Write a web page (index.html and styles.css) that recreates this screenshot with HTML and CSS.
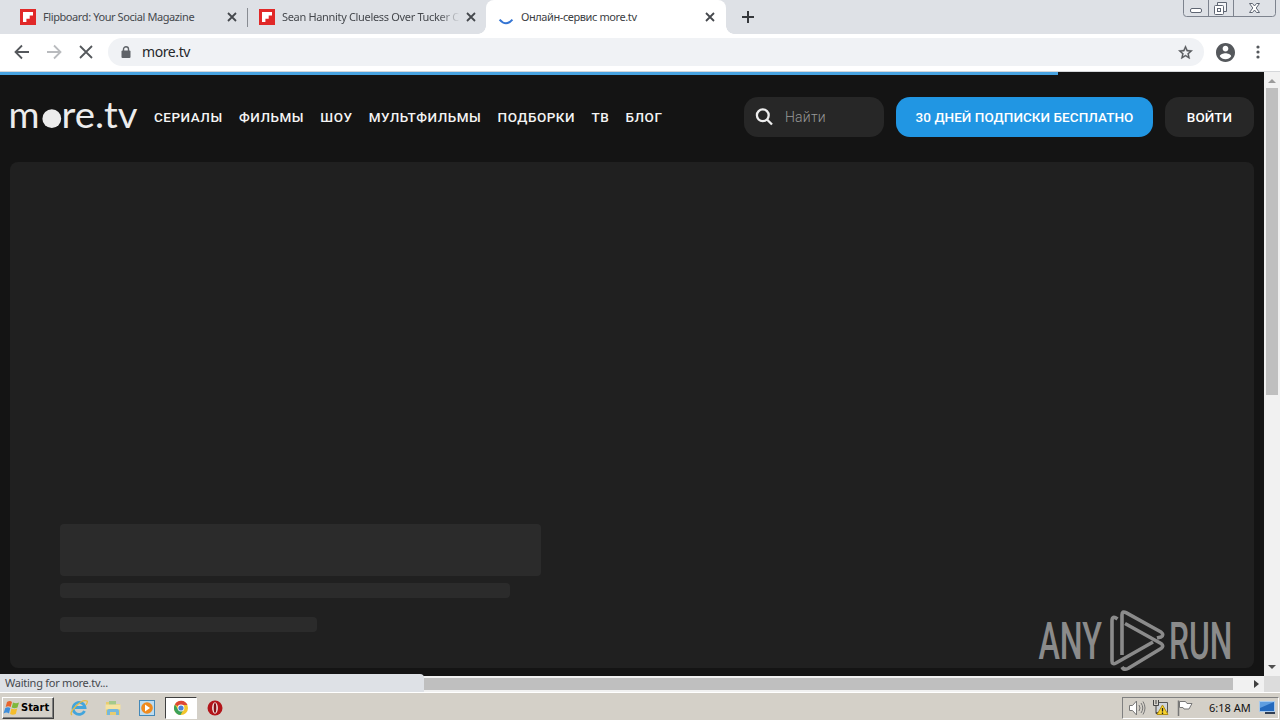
FILE: index.html
```html
<!DOCTYPE html>
<html lang="ru">
<head>
    <meta charset="UTF-8">
    <meta name="viewport" content="width=device-width, initial-scale=1.0">
    <title>Онлайн-сервис more.tv</title>
    <link rel="stylesheet" href="styles.css">
</head>
<body>
    <!-- Tabs -->
    <div class="tab-strip">
        <div class="tab tab-first">
            <svg class="favicon" viewBox="0 0 16 16"><rect width="16" height="16" fill="#e12828"/><path d="M3 3h10v3.4h-3.3v3.3H6.4V13H3z" fill="#fff"/></svg>
            <span class="tab-title">Flipboard: Your Social Magazine</span>
            <svg class="tab-close" viewBox="0 0 10 10"><path d="M1 1l8 8M9 1L1 9"/></svg>
        </div>
        <div class="tab tab-second">
            <svg class="favicon" viewBox="0 0 16 16"><rect width="16" height="16" fill="#e12828"/><path d="M3 3h10v3.4h-3.3v3.3H6.4V13H3z" fill="#fff"/></svg>
            <span class="tab-title tab-title-fade">Sean Hannity Clueless Over Tucker C</span>
            <svg class="tab-close" viewBox="0 0 10 10"><path d="M1 1l8 8M9 1L1 9"/></svg>
        </div>
        <div class="tab tab-active">
            <svg class="favicon" viewBox="0 0 16 16"><path d="M1.6 10.600Q8 18 14.4 10.600" fill="none" stroke="#3575d3" stroke-width="2"/></svg>
            <span class="tab-title">Онлайн-сервис more.tv</span>
            <svg class="tab-close" viewBox="0 0 10 10"><path d="M1 1l8 8M9 1L1 9"/></svg>
        </div>
        <svg class="new-tab" viewBox="0 0 12 12"><path d="M6 0v12M0 6h12" stroke="#35383c" stroke-width="2"/></svg>
        <div class="window-buttons">
            <svg width="93" height="17" viewBox="0 0 93 17" fill="none" stroke="#5f6673">
                <path d="M.5 0v13.5q0 3 3 3h86q3 0 3-3V0M25.5 0v16M50.5 0v16" stroke="#7d838e"/>
                <rect x="7.5" y="8.500" width="11" height="4" rx="1.500" fill="#fff"/>
                <path d="M34.500 5.500v-3h9v9h-3" fill="#f4f5f7"/>
                <rect x="31.500" y="5.500" width="9" height="9" rx="1" fill="#fff"/>
                <rect x="34.500" y="8.500" width="3" height="3"/>
                <path d="M66.500 3.500h3l2 2.500 2-2.500h3l-3.300 4.500 3.300 4.500h-3l-2-2.500-2 2.500h-3l3.300-4.500z" fill="#fff"/>
            </svg>
        </div>
    </div>

    <!-- Address bar -->
    <div class="toolbar">
        <svg class="nav-icons" width="84" height="16" viewBox="0 0 84 16" fill="none" stroke-width="1.800">
            <path d="M15 8H2M8 1.500L1.500 8 8 14.500" stroke="#55585c"/>
            <path d="M33 8h13M40 1.500L46.500 8 40 14.500" stroke="#b9bbbe"/>
            <path d="M66 2l12 12M78 2L66 14" stroke="#55585c"/>
        </svg>
        <div class="omnibox">
            <svg class="lock" viewBox="0 0 10 12"><rect x="0.500" y="4.500" width="9" height="7.500" rx="1" fill="#5f6368"/><path d="M2.500 5V3a2.500 2.200 0 0 1 5 0v2" fill="none" stroke="#5f6368" stroke-width="1.400"/></svg>
            <span class="url">more.tv</span>
            <svg class="star" viewBox="0 0 24 24"><path d="M22 9.240l-7.190-.62L12 2 9.190 8.630 2 9.240l5.460 4.730L5.820 21 12 17.270 18.180 21l-1.630-7.030L22 9.240zM12 15.400l-3.760 2.270 1-4.280-3.320-2.880 4.380-.38L12 6.100l1.710 4.040 4.380.38-3.320 2.880 1 4.280L12 15.400z" fill="#55585c" stroke="#55585c" stroke-width=".5"/></svg>
        </div>
        <svg class="profile" viewBox="2 2 20 20"><path d="M12 2C6.480 2 2 6.480 2 12s4.480 10 10 10 10-4.480 10-10S17.520 2 12 2zm0 3c1.660 0 3 1.340 3 3s-1.340 3-3 3-3-1.340-3-3 1.340-3 3-3zm0 14.200c-2.500 0-4.710-1.280-6-3.220.03-1.990 4-3.080 6-3.080 1.990 0 5.970 1.090 6 3.080-1.290 1.940-3.500 3.220-6 3.220z" fill="#55585c"/></svg>
        <svg class="menu" viewBox="0 0 4 14"><g fill="#55585c"><circle cx="2" cy="2" r="1.600"/><circle cx="2" cy="7" r="1.600"/><circle cx="2" cy="12" r="1.600"/></g></svg>
    </div>

    <div class="viewport">
        <div class="page">
            <div class="progress"></div>
            <header class="header">
                <svg class="logo" width="134" height="56" viewBox="-3 -16 134 56">
                    <text class="logo-text" x="-1.500" y="22.500" textLength="31" lengthAdjust="spacingAndGlyphs">m</text>
                    <circle cx="41.800" cy="13.700" r="9.400"/>
                    <text class="logo-text" x="51.500" y="22.500" textLength="76" lengthAdjust="spacingAndGlyphs">re.tv</text>
                </svg>
                <nav class="nav">
                    <a>СЕРИАЛЫ</a>
                    <a>ФИЛЬМЫ</a>
                    <a>ШОУ</a>
                    <a>МУЛЬТФИЛЬМЫ</a>
                    <a>ПОДБОРКИ</a>
                    <a>ТВ</a>
                    <a>БЛОГ</a>
                </nav>
                <div class="search">
                    <svg width="18" height="18" viewBox="0 0 18 18" fill="none" stroke="#eee" stroke-width="2.300"><circle cx="7.800" cy="7.300" r="5.900"/><path d="M12 11.500l5 5"/></svg>
                    <span>Найти</span>
                </div>
                <div class="btn btn-primary"><span>30 ДНЕЙ ПОДПИСКИ БЕСПЛАТНО</span></div>
                <div class="btn btn-login"><span>ВОЙТИ</span></div>
            </header>
            <!-- Placeholder while the banner is loading -->
            <div class="banner">
                <div class="skeleton skeleton-title"></div>
                <div class="skeleton skeleton-line"></div>
                <div class="skeleton skeleton-short"></div>
            </div>
        </div>
        <div class="scroll-y">
            <div class="arrow-up"></div>
            <div class="thumb-y"></div>
            <div class="arrow-down"></div>
        </div>
        <svg class="watermark" width="200" height="64" viewBox="0 0 200 64">
            <text class="watermark-text" transform="translate(2.500 50) scale(.64 1)" textLength="99" lengthAdjust="spacingAndGlyphs">ANY</text>
            <text class="watermark-text" transform="translate(133 50) scale(.64 1)" textLength="99" lengthAdjust="spacingAndGlyphs">RUN</text>
            <g fill="none" stroke="#8b8b8b" stroke-width="3.600" stroke-linejoin="round">
                <path d="M81.500 10Q76 6 76 12v40q0 4 4 2l37-21"/>
                <path d="M86 46V6q0-4.500 4-2.300L125 23q3.500 3 0 5l-4 1"/>
                <path d="M89 14.500l36 20q3.500 2.500 0 5L92 59.500q-4 2-6-1.500"/>
            </g>
        </svg>
    </div>

    <div class="scroll-x">
        <div class="thumb-x"></div>
        <div class="arrow-right"></div>
        <div class="corner"></div>
        <div class="status">Waiting for more.tv...</div>
    </div>

    <!-- Windows taskbar -->
    <div class="taskbar">
        <div class="start">
            <svg width="18" height="18" viewBox="0 0 18 18">
                <path d="M4 3q3-2 5 0L7.700 8q-2.500-1.500-5 0z" fill="#e8642c"/>
                <path d="M10 3.500q3 1.500 6 0L14.500 8.500q-3 1.500-5.800 0z" fill="#7fb83d"/>
                <path d="M2.300 9q2.700-1.600 5 0L6 14.500q-2.500-1.800-5.500 0z" fill="#3f8edb"/>
                <path d="M8.400 9.600q3 1.500 5.800 0L12.800 15q-3 1.500-5.700 0z" fill="#f4bd2c"/>
            </svg>
            <span>Start</span>
        </div>
        <div class="launch">
            <svg width="18" height="18" viewBox="0 0 18 18" fill="none">
                <path d="M14.500 12a6 6 0 1 1 .5-3.500H5" stroke="#43a5dc" stroke-width="2.800"/>
                <path d="M2 16Q-1 14 6 7T17 2q1 1-1 4" stroke="#e5bc45" stroke-width="1.300"/>
            </svg>
        </div>
        <div class="launch">
            <svg width="18" height="18" viewBox="0 0 18 18">
                <path d="M2 3h5l1 2h8v11H2z" fill="#e8cc70"/><path d="M5 2h7v5H5z" fill="#a3c98a"/>
                <path d="M1.500 5.500h15v5h-15z" fill="#f5e3a0"/><path d="M3 16v-4q0-2 2-2h8q2 0 2 2v4h-3v-3H6v3z" fill="#75b8dc"/>
            </svg>
        </div>
        <div class="launch">
            <svg width="18" height="18" viewBox="0 0 18 18">
                <rect x="1.500" y="1.500" width="15" height="15" fill="#bddcf0" stroke="#4388b8"/>
                <circle cx="9" cy="9" r="5.800" fill="#f08a1d"/><path d="M7 5.500v7l5-3.500z" fill="#fff"/>
            </svg>
        </div>
        <div class="launch launch-active">
            <svg width="16" height="16" viewBox="0 0 16 16">
                <circle cx="8" cy="8" r="7" fill="#f2c52d"/>
                <path d="M8 8L1.900 4.500A7 7 0 0 1 14.500 5H8z" fill="#dd4735"/>
                <path d="M1.900 4.500A7 7 0 0 0 7.500 15L10.500 9.500H5z" fill="#3ba159"/>
                <circle cx="8" cy="8" r="3.400" fill="#fff"/><circle cx="8" cy="8" r="2.600" fill="#4a82d8"/>
            </svg>
        </div>
        <div class="launch">
            <svg width="16" height="16" viewBox="0 0 16 16">
                <circle cx="8" cy="8" r="7.500" fill="#b3151a"/>
                <ellipse cx="8" cy="8" rx="2.900" ry="5.800" fill="#f3e3e0"/><ellipse cx="8" cy="8" rx="1.300" ry="4.900" fill="#841015"/>
            </svg>
        </div>
        <div class="tray">
            <svg width="68" height="18" viewBox="0 0 68 18">
                <g fill="#fff" stroke="#777">
                    <path d="M1.500 6.500h3l4-4.500v14l-4-4.500h-3z"/>
                    <path d="M11 6q2 3 0 6M13 4q3.500 5 0 10M15 2.500q4 6.500 0 13" fill="none"/>
                    <path d="M50.500 17V1.500" stroke-width="1.500"/>
                    <path d="M51.500 2.500h6l1.500 2h5l-3 5.500h-5l-1-1.500h-3.500z"/>
                </g>
                <path d="M30 3.500h9.500v10H28" fill="#cfd4db" stroke="#555"/>
                <path d="M25.500 1v5.500h5V1M28 6v8.500h5M28 1v4" fill="none" stroke="#444"/>
                <path d="M34.500 6l5.500 9.500H29z" fill="#f7d22d" stroke="#b08d12"/>
                <path d="M34.500 9v3.500M34.500 13.500V15" stroke="#222" stroke-width="1.300"/>
            </svg>
            <span class="clock">6:18 AM</span>
            <svg width="17" height="15" viewBox="0 0 17 15">
                <rect x=".5" y="1.500" width="15" height="10" fill="#2469bd" stroke="#a7c9ec"/>
                <path d="M1 2h14L1 8z" fill="#5e9de0"/><path d="M6 13h10" stroke="#303d52" stroke-width="2"/>
            </svg>
        </div>
    </div>
</body>
</html>
```

FILE: styles.css
```css
* {
    box-sizing: border-box;
}
body {
    margin: 0;
    width: 1280px;
    height: 720px;
    overflow: hidden;
    display: flex;
    flex-direction: column;
    background: #141414;
    font-family: "Noto Sans", sans-serif;
    font-size: 11px;
}
svg {
    display: block;
    flex: none;
}

/* Browser window */
.tab-strip {
    display: flex;
    height: 34px;
    flex: none;
    background: #dee1e6;
    position: relative;
}
.tab {
    display: flex;
    align-items: center;
    height: 34px;
    color: #45484d;
}
.tab-first {
    width: 247px;
    padding: 0 10px 0 20px;
}
.tab-second {
    width: 239px;
    padding: 0 10px 0 12px;
    position: relative;
}
.tab-second::before {
    content: "";
    position: absolute;
    left: 0;
    top: 8px;
    width: 1px;
    height: 19px;
    background: #888c92;
}
.tab-active {
    width: 240px;
    padding: 0 11px 0 12px;
    background: #fff;
    border-radius: 8px 8px 0 0;
    color: #3c4043;
    position: relative;
}
.tab-active::before,
.tab-active::after {
    content: "";
    position: absolute;
    bottom: 0;
    width: 8px;
    height: 8px;
}
.tab-active::before {
    left: -8px;
    background: radial-gradient(circle at 0 0, #dee1e6 7.5px, #fff 8px);
}
.tab-active::after {
    right: -8px;
    background: radial-gradient(circle at 100% 0, #dee1e6 7.5px, #fff 8px);
}
.favicon {
    width: 16px;
    height: 16px;
    margin-right: 7px;
}
.tab-title {
    flex: 1;
    white-space: nowrap;
    line-height: 16px;
    letter-spacing: -0.41px;
}
.tab-title-fade {
    margin-right: 6px;
    letter-spacing: -0.33px;
    -webkit-mask-image: linear-gradient(to right, #000 88%, transparent);
    mask-image: linear-gradient(to right, #000 88%, transparent);
}
.tab-close {
    width: 10px;
    height: 10px;
    stroke: #45484d;
    stroke-width: 1.8;
}
.new-tab {
    width: 12px;
    height: 12px;
    margin: 11px 0 0 16px;
}
.window-buttons {
    margin-left: auto;
    margin-right: 4px;
}
.toolbar {
    display: flex;
    align-items: center;
    height: 38px;
    flex: none;
    padding: 0 18px 1px 14px;
    background: #fff;
    border-bottom: 1px solid #d5d7da;
}
.omnibox {
    display: flex;
    align-items: center;
    width: 1096px;
    height: 28px;
    margin-left: 10px;
    padding: 0 10px 0 13px;
    background: #f0f2f5;
    border-radius: 14px;
}
.lock {
    width: 10px;
    height: 12px;
}
.url {
    flex: 1;
    margin-left: 11px;
    padding-bottom: 1px;
    font-size: 14px;
    letter-spacing: -0.4px;
    color: #26282b;
}
.star {
    width: 17px;
    height: 17px;
}
.profile {
    width: 19px;
    height: 19px;
    margin-left: 12px;
}
.menu {
    width: 4px;
    height: 14px;
    margin-left: 21px;
}

/* Page */
.viewport {
    display: flex;
    height: 604px;
    flex: none;
    position: relative;
}
.page {
    width: 1264px;
    background: #141414;
}
.progress {
    width: 1058px;
    height: 3px;
    background: #49a4e2;
}
.header {
    display: flex;
    align-items: center;
    height: 84px;
    padding: 0 10px 0 7px;
}
.logo {
    margin-right: 13px;
    fill: #ececec;
}
.logo-text {
    font-family: Lato, sans-serif;
    font-size: 36px;
}
.nav {
    display: flex;
    gap: 16.3px;
    font-family: Roboto, sans-serif;
    font-size: 13.5px;
    font-weight: 500;
    letter-spacing: 0.52px;
    color: #f4f4f4;
}
.search {
    display: flex;
    align-items: center;
    width: 140px;
    height: 40px;
    margin-left: auto;
    padding-left: 11px;
    border-radius: 14px;
    background: #272727;
    color: #999;
    font-family: Roboto, sans-serif;
    font-size: 14px;
    font-weight: 300;
    letter-spacing: 0.2px;
}
.search span {
    margin-left: 12px;
}
.btn {
    display: flex;
    align-items: center;
    justify-content: center;
    height: 40px;
    margin-left: 12px;
    border-radius: 14px;
    color: #fff;
    font-family: Roboto, sans-serif;
    font-size: 13.5px;
    font-weight: 500;
    letter-spacing: 0.05px;
    white-space: nowrap;
}
.btn-primary {
    width: 257px;
    background: #2196e3;
}
.btn-login {
    width: 89px;
    background: #272727;
}
.banner {
    display: flex;
    flex-direction: column;
    width: 1244px;
    height: 506px;
    margin: 3px 10px 0;
    padding: 362px 50px 0;
    border-radius: 8px;
    background: #202020;
}
.skeleton {
    border-radius: 4px;
    background: #2b2b2b;
}
.skeleton-title {
    width: 481px;
    height: 52px;
}
.skeleton-line {
    width: 450px;
    height: 15px;
    margin-top: 7px;
}
.skeleton-short {
    width: 257px;
    height: 15px;
    margin-top: 19px;
}
.watermark {
    position: absolute;
    left: 1036px;
    top: 537px;
}
.watermark-text {
    font-family: Roboto, sans-serif;
    font-size: 52px;
    font-weight: 500;
    fill: #8b8b8b;
}

/* Scrollbars */
.scroll-y {
    display: flex;
    flex-direction: column;
    align-items: center;
    width: 16px;
    background: #f1f1f1;
}
.arrow-up,
.arrow-down {
    border-left: 4px solid transparent;
    border-right: 4px solid transparent;
}
.arrow-up {
    margin-top: 7px;
    border-bottom: 4px solid #9b9b9b;
}
.thumb-y {
    width: 12px;
    height: 307px;
    margin-top: 5px;
    background: #bfbfbf;
}
.arrow-down {
    margin: auto 0 7px;
    border-top: 4px solid #505050;
}
.scroll-x {
    display: flex;
    align-items: center;
    height: 16px;
    flex: none;
    background: #f1f1f1;
    position: relative;
}
.thumb-x {
    width: 1233px;
    height: 12px;
    background: #bfbfbf;
}
.arrow-right {
    margin-left: 21px;
    border-top: 4px solid transparent;
    border-bottom: 4px solid transparent;
    border-left: 5px solid #404040;
}
.corner {
    width: 16px;
    height: 16px;
    margin-left: auto;
    background: #dcdcdc;
}
.status {
    position: absolute;
    left: 0;
    top: -2px;
    width: 424px;
    height: 18px;
    padding-left: 5px;
    border-top-right-radius: 4px;
    background: #dee1e6;
    color: #45484d;
    line-height: 18px;
    letter-spacing: -0.25px;
}

/* Taskbar */
.taskbar {
    display: flex;
    align-items: center;
    height: 28px;
    flex: none;
    padding: 2px 0 0 2px;
    background: #d4d0c8;
    border-top: 1px solid #fff;
}
.start {
    display: flex;
    align-items: center;
    width: 52px;
    height: 22px;
    margin-right: 9px;
    border: 1px solid;
    border-color: #fff #404040 #404040 #fff;
    box-shadow: inset -1px -1px #808080;
    font-family: "DejaVu Sans Condensed", "DejaVu Sans", sans-serif;
    font-weight: bold;
}
.launch {
    display: flex;
    align-items: center;
    justify-content: center;
    width: 32px;
    height: 22px;
    margin-right: 2px;
}
.launch-active {
    background: #fff;
    border: 1px solid;
    border-color: #404040 #fff #fff #404040;
}
.tray {
    display: flex;
    align-items: center;
    width: 157px;
    height: 22px;
    margin-left: auto;
    margin-right: 1px;
    padding-left: 5px;
    border: 1px solid;
    border-color: #808080 #fff #fff #808080;
}
.clock {
    width: 50px;
    margin-left: 13px;
    color: #111;
}
```
